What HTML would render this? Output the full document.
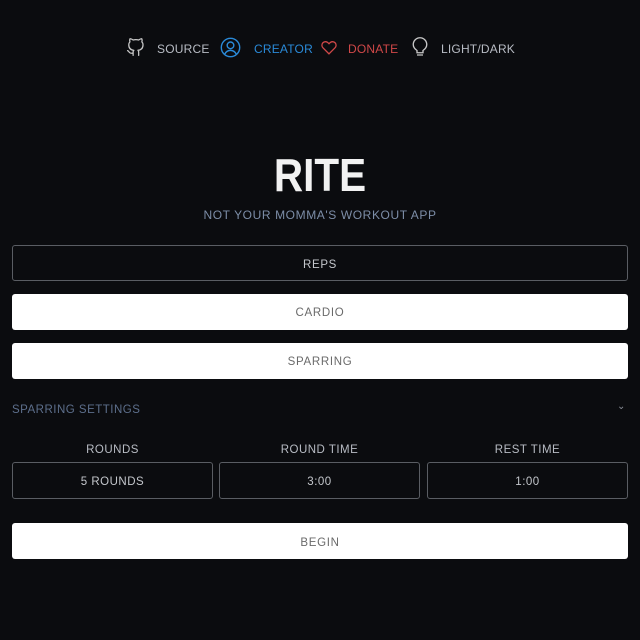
<!DOCTYPE html>
<html><head><style>
*{box-sizing:border-box;margin:0;padding:0}
body{width:640px;height:640px;background:#0b0c0f;font-family:"Liberation Sans",sans-serif;position:relative;overflow:hidden;color:#c8c8c8}
.a{position:absolute}
.nav{top:37px;left:0;width:640px;height:22px;font-size:12px;letter-spacing:0.2px}
.nav span{position:absolute;top:5px}
.btn{position:absolute;left:12px;width:616px;height:36px;border-radius:3px;text-align:center;line-height:39px;font-size:11.5px;letter-spacing:0.7px}
.dark{border:1px solid #5a5d63;color:#c4c7cc;background:#0b0c0f;line-height:37px}
.light{background:#fff;color:#6a6a6a}
.lbl{position:absolute;top:444px;font-size:11.5px;letter-spacing:0.5px;color:#b8bcc4;text-align:center}
.in{position:absolute;top:462px;height:37px;border:1px solid #5a5d63;border-radius:3px;text-align:center;line-height:39px;font-size:11.5px;letter-spacing:0.5px;color:#c4c7cc}
</style></head><body>
<div class="a nav">
<svg class="a" style="left:126px;top:1px" width="19" height="19" viewBox="0 0 24 24" fill="none" stroke="#c8c8c8" stroke-width="1.6" stroke-linecap="round" stroke-linejoin="round"><path d="M9 19c-5 1.5-5-2.5-7-3m14 6v-3.9a3.4 3.4 0 0 0-.9-2.6c3.1-.3 6.4-1.5 6.4-7A5.4 5.4 0 0 0 20 4.8 5 5 0 0 0 19.9 1S18.7.7 16 2.5a13.4 13.4 0 0 0-7 0C6.3.7 5.1 1 5.1 1A5 5 0 0 0 5 4.8a5.4 5.4 0 0 0-1.5 3.8c0 5.4 3.3 6.6 6.4 7A3.4 3.4 0 0 0 9 18.1V22"/></svg>
<span style="left:157px;color:#b8bcc4">SOURCE</span>
<svg class="a" style="left:220px;top:0px" width="21" height="21" viewBox="0 0 24 24" fill="none" stroke="#2a8ad8" stroke-width="1.6"><circle cx="12" cy="12" r="10.5"/><circle cx="12" cy="9.5" r="3.8"/><path d="M5.5 19.5c1.5-3 4-4.2 6.5-4.2s5 1.2 6.5 4.2"/></svg>
<span style="left:254px;color:#2a8ad8">CREATOR</span>
<svg class="a" style="left:320px;top:2px" width="18" height="17" viewBox="0 0 24 24" fill="none" stroke="#d04848" stroke-width="1.8"><path d="M12 21l-8.5-8.6a5 5 0 0 1 7-7.2L12 6.7l1.5-1.5a5 5 0 0 1 7 7.2z"/></svg>
<span style="left:348px;color:#d04848">DONATE</span>
<svg class="a" style="left:411px;top:0px" width="18" height="21" viewBox="0 0 24 28" fill="none" stroke="#c8c8c8" stroke-width="1.8"><path d="M8 21v-3c-3-2-5-4.5-5-8a9 9 0 0 1 18 0c0 3.5-2 6-5 8v3zM8 24h8"/></svg>
<span style="left:441px;color:#b8bcc4">LIGHT/DARK</span>
</div>
<div class="a" style="top:148px;left:0;width:640px;text-align:center;font-size:46px;font-weight:bold;color:#f2f2f2;transform:scaleX(0.88)">RITE</div>
<div class="a" style="top:208px;left:0;width:640px;text-align:center;font-size:12px;color:#7d8ea8;letter-spacing:0.6px">NOT YOUR MOMMA'S WORKOUT APP</div>
<div class="btn dark" style="top:245px;line-height:38px">REPS</div>
<div class="btn light" style="top:294px">CARDIO</div>
<div class="btn light" style="top:343px">SPARRING</div>
<div class="a" style="top:403px;left:12px;font-size:11.5px;color:#5d6f8c;letter-spacing:0.5px;line-height:14px">SPARRING SETTINGS</div>
<div class="a" style="top:401px;left:617px;font-size:10px;color:#8a8f98">&#8964;</div>
<div class="lbl" style="left:12px;width:201px">ROUNDS</div>
<div class="lbl" style="left:219px;width:201px">ROUND TIME</div>
<div class="lbl" style="left:427px;width:201px">REST TIME</div>
<div class="in" style="left:12px;width:201px">5 ROUNDS</div>
<div class="in" style="left:219px;width:201px">3:00</div>
<div class="in" style="left:427px;width:201px">1:00</div>
<div class="btn light" style="top:523px;line-height:40px">BEGIN</div>
</body></html>
